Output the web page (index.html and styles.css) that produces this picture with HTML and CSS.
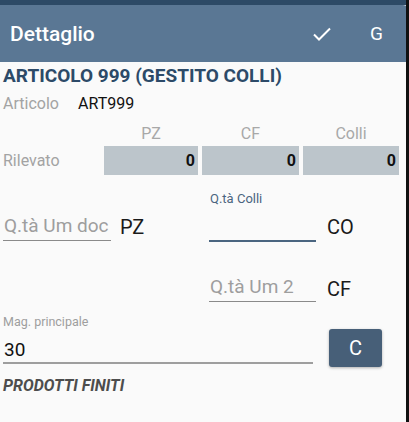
FILE: index.html
```html
<!DOCTYPE html>
<html>
<head>
<meta charset="utf-8">
<link rel="stylesheet" href="styles.css">
</head>
<body>
<div class="screen">
  <div class="statusbar"></div>
  <div class="appbar">
    <div class="title">Dettaglio</div>
    <div class="actions">
      <svg class="check" width="20" height="16" viewBox="0 0 20 16"><path d="M2 8.5 L7 13.5 L18 2.5" fill="none" stroke="#fff" stroke-width="2"/></svg>
      <span class="g">G</span>
    </div>
  </div>
  <div class="content">
    <div class="heading">ARTICOLO 999 (GESTITO COLLI)</div>
    <div class="artrow"><span class="lbl">Articolo</span><span class="val">ART999</span></div>
    <div class="grid">
      <div></div>
      <div class="colh">PZ</div>
      <div class="colh">CF</div>
      <div class="colh">Colli</div>
      <div class="lbl">Rilevato</div>
      <div class="box">0</div>
      <div class="box">0</div>
      <div class="box">0</div>
    </div>
    <div class="qrow1">
      <div class="field f1"><span class="ph">Q.tà Um doc</span></div>
      <span class="um um1">PZ</span>
      <div class="field f2 focus"><span class="flabel">Q.tà Colli</span></div>
      <span class="um">CO</span>
    </div>
    <div class="qrow2">
      <div class="field f2"><span class="ph">Q.tà Um 2</span></div>
      <span class="um">CF</span>
    </div>
    <div class="magrow">
      <div class="field mag"><span class="flabel gray">Mag. principale</span><span class="mval">30</span></div>
      <button class="btn">C</button>
    </div>
    <div class="desc">PRODOTTI FINITI</div>
  </div>
  <div class="edge"></div>
</div>
</body>
</html>
```
FILE: styles.css
```css
* { box-sizing: border-box; }
html, body { margin: 0; padding: 0; }
body { width: 409px; height: 422px; overflow: hidden; background: #111; font-family: Roboto, "Noto Sans", sans-serif; }
.screen { position: relative; width: 409px; height: 422px; background: #fafafa; }
.statusbar { height: 5px; background: #2d4a66; }
.appbar { height: 57px; background: #5a7794; display: flex; align-items: center; justify-content: space-between; padding: 0 26px 0 10px; border-top-right-radius: 6px; }
.title { color: #fff; font-size: 21px; font-weight: 500; margin-top: 0; }
.actions { display: flex; align-items: center; gap: 38px; }
.check { margin-top: 1px; }
.g { color: #fff; font-size: 19px; }
.content { padding: 3px 7px 0 3px; }
.heading { color: #2c4a68; font-weight: 700; font-size: 19px; line-height: 22px; }
.artrow { display: flex; font-size: 16px; line-height: 20px; margin-top: 7px; }
.lbl { color: #a3a3a3; font-size: 16px; }
.artrow .lbl { width: 75px; }
.val { color: #111; }
.grid { display: grid; grid-template-columns: 97px 94px 97px 96px; grid-template-rows: 19px 29px; column-gap: 4px; row-gap: 3px; margin-top: 10px; align-items: center; }
.grid .colh { color: #a8a8a8; font-size: 16px; text-align: center; line-height: 19px; }
.grid .lbl { line-height: 20px; }
.box { background: #bcc5cb; height: 29px; line-height: 29px; text-align: right; padding-right: 3px; font-weight: 700; font-size: 16px; color: #111; }
.field { position: relative; display: flex; flex-direction: column; justify-content: flex-end; border-bottom: 1px solid #8a8a8a; }
.ph { color: #9e9e9e; font-size: 19px; line-height: 22px; padding-bottom: 3px; padding-left: 1px; }
.flabel { position: absolute; left: 1px; top: 0; font-size: 13px; line-height: 15px; color: #4a6580; }
.qrow1 { display: flex; align-items: flex-end; margin-top: 16px; height: 51px; }
.f1 { width: 108px; height: 26px; margin-bottom: 1px; }
.um { font-size: 20px; color: #1a1a1a; margin-left: 11px; line-height: 22px; margin-bottom: 4px; }
.um1 { width: 89px; margin-left: 9px; }
.f2 { width: 107px; height: 26px; }
.focus { border-bottom: 2px solid #4a6580; height: 51px; }
.qrow2 { display: flex; align-items: flex-end; margin-top: 34px; padding-left: 206px; }
.qrow2 .um { margin-bottom: 2px; }
.magrow { display: flex; align-items: flex-end; margin-top: 12px; }
.mag { width: 310px; border-bottom: 2px solid #9e9e9e; height: 50px; justify-content: flex-start; }
.flabel.gray { color: #9e9e9e; position: static; display: block; font-size: 12.5px; }
.mval { display: block; font-size: 19px; color: #111; line-height: 24px; margin-top: 9px; padding-left: 1px; }
.btn { margin-left: 16px; margin-bottom: -3px; width: 53px; height: 38px; border: none; border-radius: 3px; background: #475f78; color: #fff; font-family: Roboto, sans-serif; font-size: 20px; box-shadow: 0 1px 3px rgba(0,0,0,0.3); padding: 0; }
.desc { margin-top: 12px; font-size: 16px; line-height: 19px; font-weight: 700; font-style: italic; color: #4d4d4d; }
.edge { position: absolute; right: 0; top: 0; width: 3px; height: 422px; background: #111; }
```
